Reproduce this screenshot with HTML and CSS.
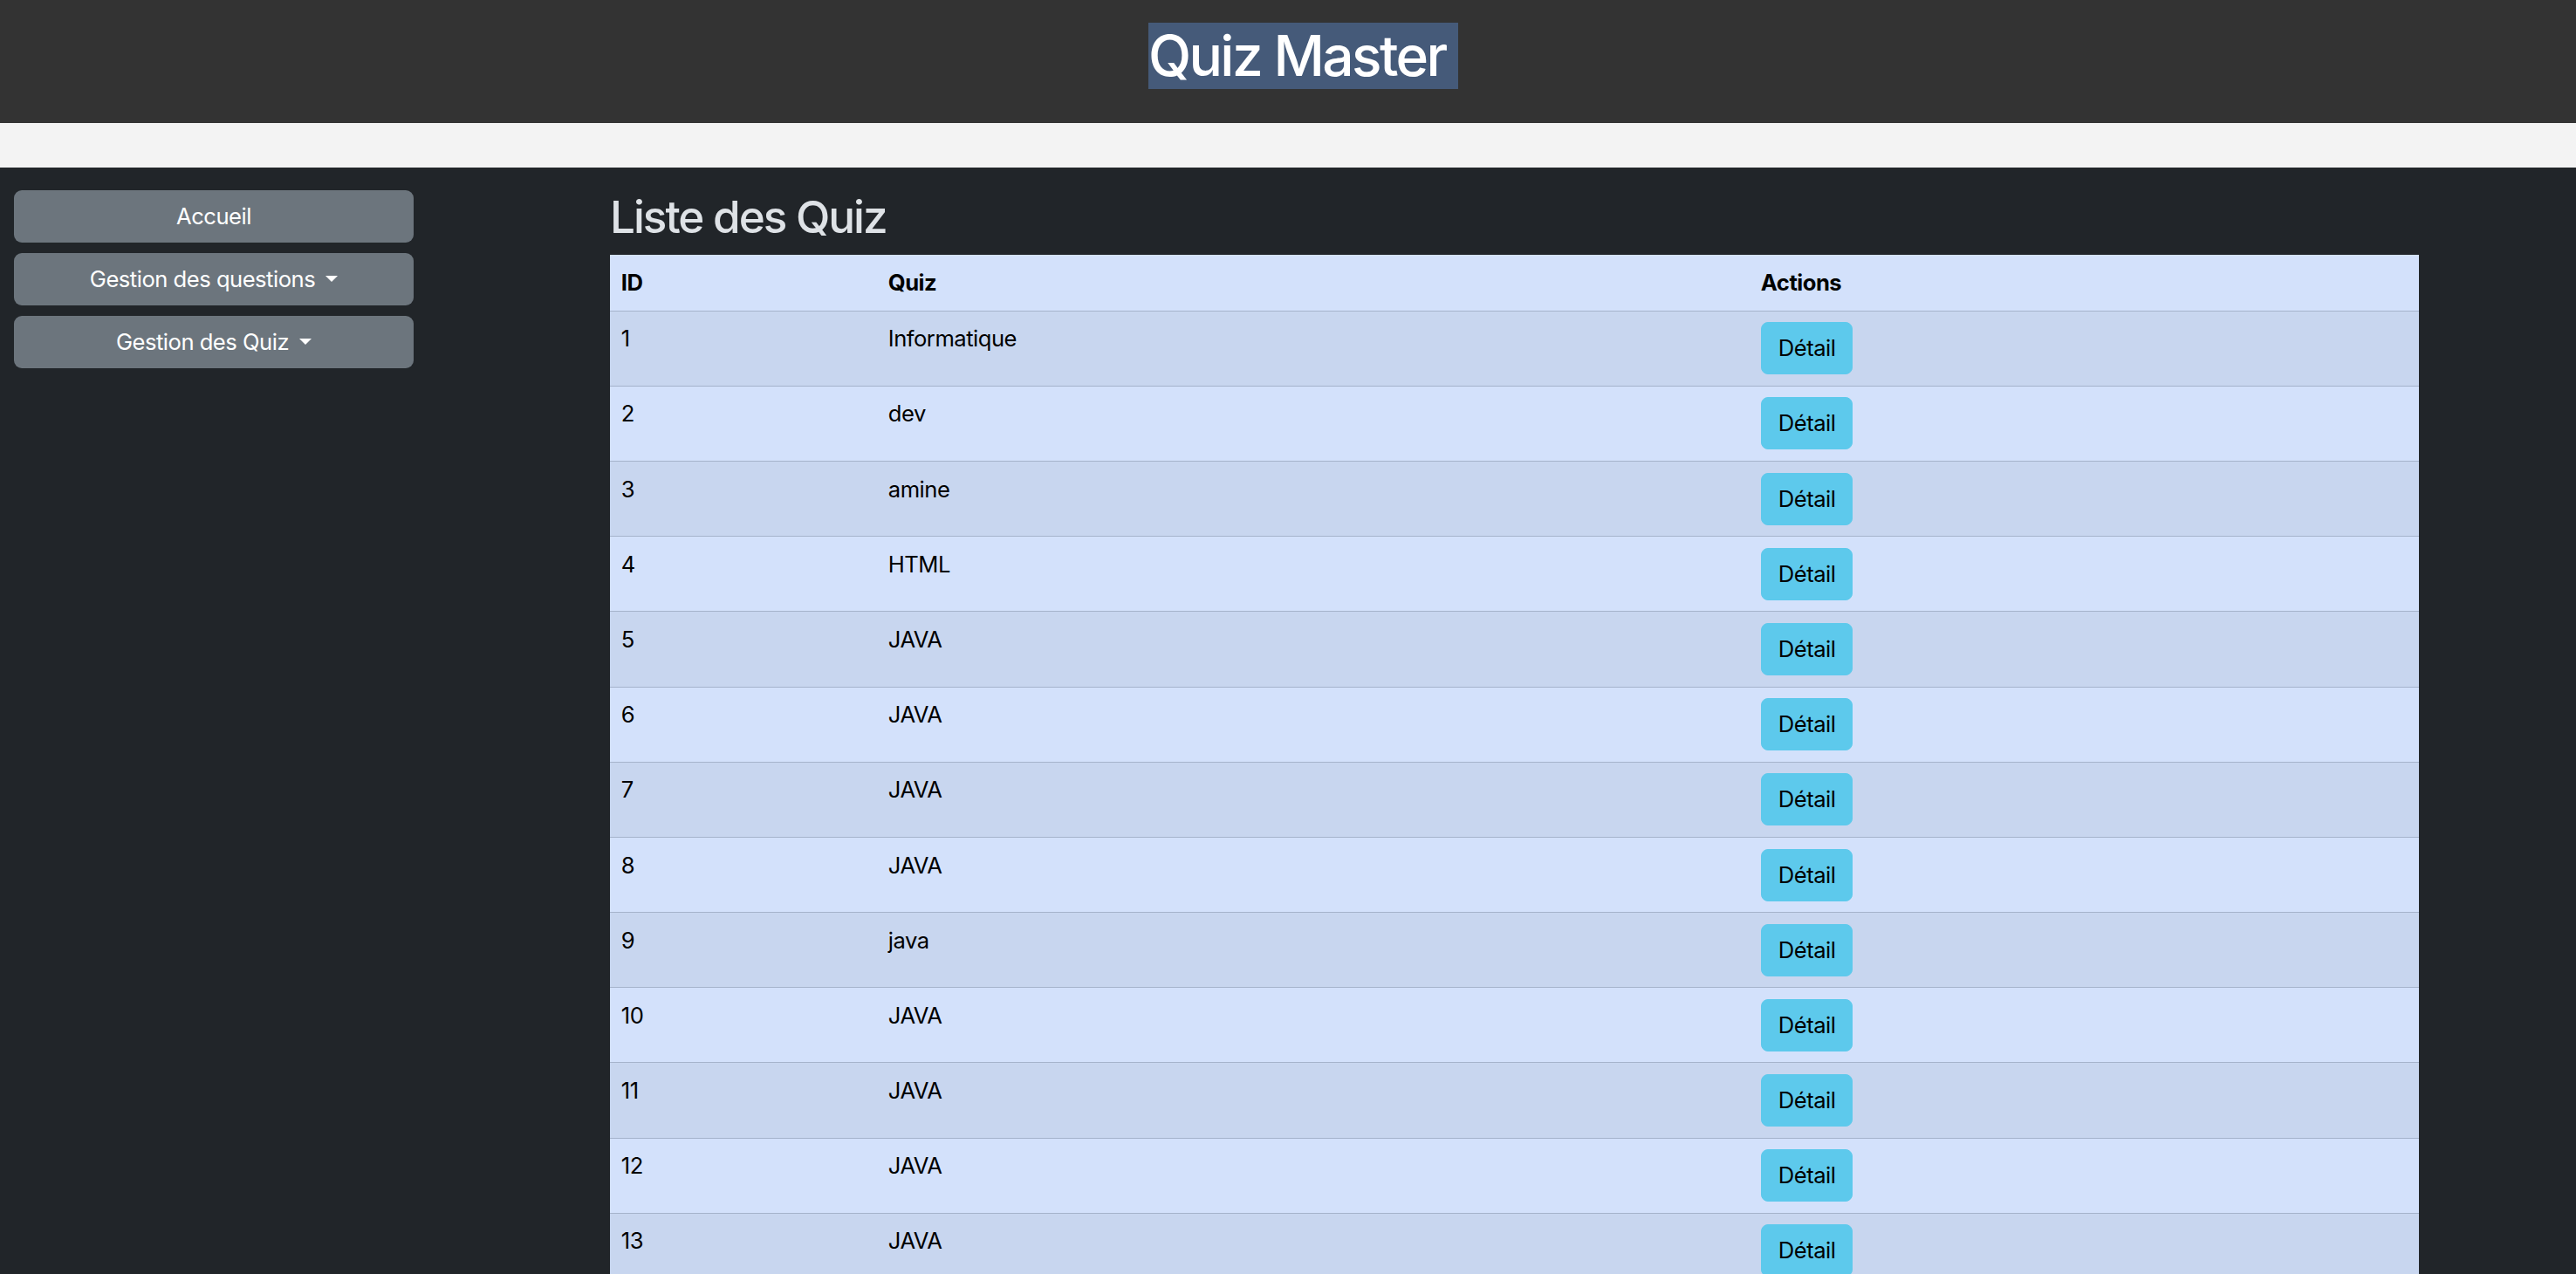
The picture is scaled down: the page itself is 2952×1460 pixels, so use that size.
FILE: index.html
```html
<!DOCTYPE html>
<html lang="fr">
<head>
<meta charset="utf-8">
<title>Quiz Master</title>
<link rel="stylesheet" href="styles.css">
</head>
<body>
<header class="topbar">
  <h1 class="brand"><span class="brand-sel">Quiz Master&nbsp;</span></h1>
</header>
<div class="band"></div>
<div class="layout">
  <nav class="sidebar">
    <a class="side-btn" href="#">Accueil</a>
    <a class="side-btn dropdown" href="#">Gestion des questions</a>
    <a class="side-btn dropdown" href="#">Gestion des Quiz</a>
  </nav>
  <main class="content">
    <h2 class="page-title">Liste des Quiz</h2>
    <table class="quiz-table">
      <thead>
        <tr><th class="col-id">ID</th><th class="col-quiz">Quiz</th><th class="col-actions">Actions</th></tr>
      </thead>
      <tbody>
        <tr><td>1</td><td>Informatique</td><td><button class="btn-detail">Détail</button></td></tr>
        <tr><td>2</td><td>dev</td><td><button class="btn-detail">Détail</button></td></tr>
        <tr><td>3</td><td>amine</td><td><button class="btn-detail">Détail</button></td></tr>
        <tr><td>4</td><td>HTML</td><td><button class="btn-detail">Détail</button></td></tr>
        <tr><td>5</td><td>JAVA</td><td><button class="btn-detail">Détail</button></td></tr>
        <tr><td>6</td><td>JAVA</td><td><button class="btn-detail">Détail</button></td></tr>
        <tr><td>7</td><td>JAVA</td><td><button class="btn-detail">Détail</button></td></tr>
        <tr><td>8</td><td>JAVA</td><td><button class="btn-detail">Détail</button></td></tr>
        <tr><td>9</td><td>java</td><td><button class="btn-detail">Détail</button></td></tr>
        <tr><td>10</td><td>JAVA</td><td><button class="btn-detail">Détail</button></td></tr>
        <tr><td>11</td><td>JAVA</td><td><button class="btn-detail">Détail</button></td></tr>
        <tr><td>12</td><td>JAVA</td><td><button class="btn-detail">Détail</button></td></tr>
        <tr><td>13</td><td>JAVA</td><td><button class="btn-detail">Détail</button></td></tr>
      </tbody>
    </table>
  </main>
</div>
</body>
</html>
```
FILE: styles.css
```css
* { box-sizing: border-box; }
html, body {
  margin: 0;
  padding: 0;
}
body {
  background: #212529;
  color: #dee2e6;
  font-family: Inter, "Liberation Sans", sans-serif;
  font-size: 25.6px;
  line-height: 1.5;
  letter-spacing: -0.5px;
}
.topbar {
  background: #333333;
  padding: 25.6px 0 25.6px;
  text-align: center;
}
.brand {
  margin: 0 0 12.8px;
  font-size: 64px;
  font-weight: 500;
  line-height: 1.2;
  color: #ffffff;
}
.brand-sel {
  display: inline-block;
  background: #455a79;
  margin-left: 35px;
  letter-spacing: -2.6px;
}
.band {
  height: 51px;
  background: #f3f3f3;
}
.layout {
  display: flex;
  padding-top: 26px;
}
.sidebar {
  width: 458px;
  margin-left: 16px;
  display: flex;
  flex-direction: column;
  gap: 12px;
}
.side-btn {
  display: block;
  height: 60px;
  background: #6c757d;
  color: #ffffff;
  text-decoration: none;
  text-align: center;
  border-radius: 9px;
  line-height: 60px;
  font-size: 25.6px;
}
.side-btn.dropdown::after {
  content: "";
  display: inline-block;
  margin-left: 12px;
  vertical-align: 6px;
  border-top: 7px solid #ffffff;
  border-left: 7px solid transparent;
  border-right: 7px solid transparent;
}
.content {
  margin-left: 225px;
  width: 2073px;
}
.page-title {
  margin: 0 0 12.8px;
  font-size: 51.2px;
  font-weight: 500;
  line-height: 1.2;
  color: #dee2e6;
  letter-spacing: -2px;
}
.quiz-table {
  width: 100%;
  border-collapse: collapse;
  color: #000000;
  background: #d3e1fb;
}
.quiz-table th,
.quiz-table td {
  text-align: left;
  vertical-align: top;
  padding: 12.6px 12.8px;
  line-height: 38.4px;
  border-bottom: 1px solid #a5b3cb;
}
.quiz-table th {
  font-weight: 700;
  padding-top: 12.6px;
  padding-bottom: 12.6px;
}
.col-id { width: 306px; }
.col-quiz { width: 1000px; }
.quiz-table tbody tr:nth-child(odd) {
  background: #c8d6ef;
}
.btn-detail {
  display: inline-block;
  height: 60px;
  padding: 0 19px;
  font-family: inherit;
  font-size: 25.6px;
  letter-spacing: -0.5px;
  line-height: 58px;
  color: #000000;
  background: #5dc9ec;
  border: 1px solid #5dc9ec;
  border-radius: 8px;
  vertical-align: top;
}
```
